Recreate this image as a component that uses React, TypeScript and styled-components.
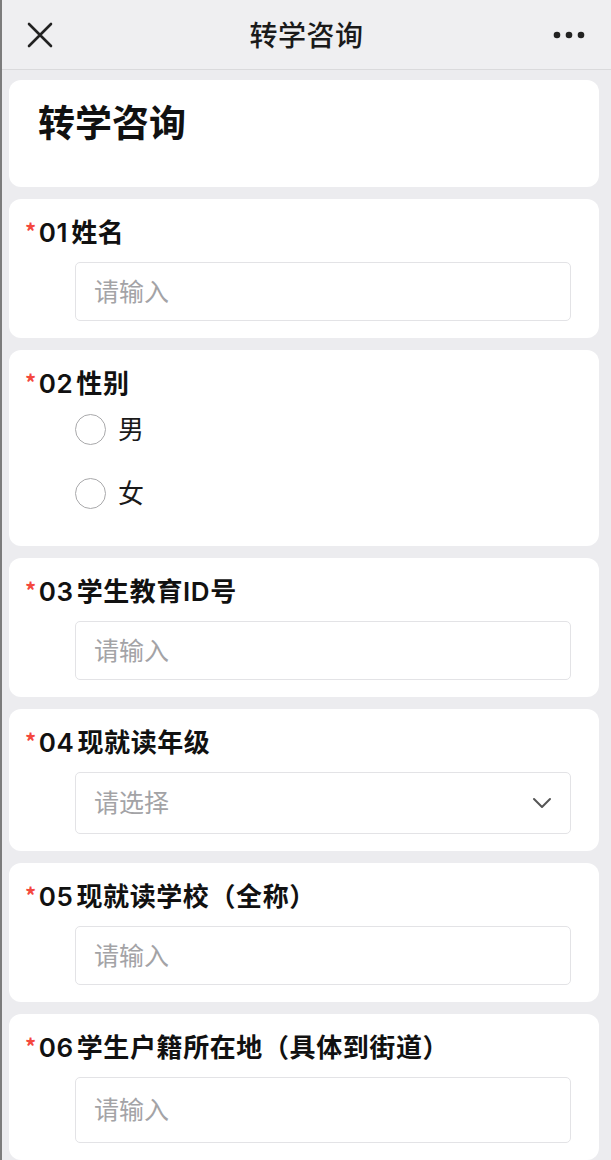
import React from "react";
import styled, { createGlobalStyle } from "styled-components";

const GlobalStyle = createGlobalStyle`
  html, body {
    margin: 0;
    padding: 0;
    background: #ececef;
  }
  body {
    font-family: "Noto Sans CJK SC", "Noto Sans", sans-serif;
    color: #111;
  }
  * { box-sizing: border-box; }
`;

const Page = styled.div`
  min-height: 1160px;
  border-left: 2px solid #7c7c7c;
  background: #ececef;
  overflow: hidden;
`;

const NavBar = styled.div`
  height: 70px;
  display: grid;
  grid-template-columns: 80px 1fr 80px;
  align-items: center;
  background: #efeff1;
  border-bottom: 1px solid #dadadc;
`;

const NavTitle = styled.div`
  text-align: center;
  font-size: 28px;
  font-weight: 500;
  color: #1a1a1a;
  letter-spacing: 0.5px;
  padding-bottom: 2px;
`;

const NavButton = styled.div<{ $align: "left" | "right" }>`
  display: flex;
  justify-content: ${(p) => (p.$align === "left" ? "flex-start" : "flex-end")};
  padding: ${(p) => (p.$align === "left" ? "0 0 0 25px" : "0 26px 0 0")};
  align-items: center;
`;

const Content = styled.div`
  display: flex;
  flex-direction: column;
  gap: 12px;
  padding: 10px 12px 0 7px;
`;

const Card = styled.div<{ $bottom?: number }>`
  background: #fff;
  border-radius: 12px;
  padding: 19px 28px ${(p) => p.$bottom ?? 17}px 16px;
`;

const TitleCard = styled.div`
  background: #fff;
  border-radius: 12px;
  height: 107px;
  display: flex;
  align-items: center;
  padding: 0 0 26px 29px;
  font-size: 37px;
  font-weight: 700;
  color: #111;
`;

const Label = styled.div`
  height: 28px;
  line-height: 28px;
  font-family: Inter, "Noto Sans CJK SC", sans-serif;
  font-size: 26px;
  font-weight: 600;
  letter-spacing: 0.6px;
  color: #111;
  white-space: nowrap;
`;

const Num = styled.span`
  margin-right: 3px;
`;

const Star = styled.span`
  color: #f4483d;
  font-family: "Noto Sans CJK SC", sans-serif;
  font-size: 22px;
  font-weight: 700;
  margin-right: 2px;
  position: relative;
  top: -2px;
`;

const Field = styled.div`
  margin: 16px 0 0 50px;
`;

const InputBox = styled.div<{ $height: number }>`
  height: ${(p) => p.$height}px;
  border: 1px solid #e3e3e6;
  border-radius: 5px;
  display: flex;
  align-items: center;
  justify-content: space-between;
  padding: 0 18px 0 18px;
  font-size: 25px;
  color: #a3a3a6;
`;

const RadioGroup = styled.div`
  margin: 0 0 0 50px;
  display: flex;
  flex-direction: column;
`;

const RadioRow = styled.div`
  height: 64px;
  display: flex;
  align-items: center;
  gap: 12px;
  font-size: 26px;
  color: #1a1a1a;
`;

const RaisedText = styled.span`
  position: relative;
  top: -2px;
`;

const RadioCircle = styled.span`
  width: 31px;
  height: 31px;
  border-radius: 50%;
  border: 1.5px solid #a9a9ab;
  background: #fff;
`;

const CloseIcon = () => (
  <svg width="26" height="26" viewBox="0 0 26 26">
    <path d="M2 2 L24 24 M24 2 L2 24" stroke="#222" strokeWidth="2.6" strokeLinecap="round" />
  </svg>
);

const MoreIcon = () => (
  <svg width="32" height="8" viewBox="0 0 32 8">
    <circle cx="4" cy="4" r="3.3" fill="#222" />
    <circle cx="16" cy="4" r="3.3" fill="#222" />
    <circle cx="28" cy="4" r="3.3" fill="#222" />
  </svg>
);

const Chevron = () => (
  <svg width="20" height="12" viewBox="0 0 20 12">
    <polyline points="2,2 10,10 18,2" fill="none" stroke="#555" strokeWidth="2" strokeLinecap="round" strokeLinejoin="round" />
  </svg>
);

type TextField = { no: string; title: string; height: number; select?: boolean };

const fieldsTop: TextField[] = [{ no: "01", title: "姓名", height: 59 }];
const fieldsBottom: TextField[] = [
  { no: "03", title: "学生教育ID号", height: 59 },
  { no: "04", title: "现就读年级", height: 62, select: true },
  { no: "05", title: "现就读学校（全称）", height: 59 },
  { no: "06", title: "学生户籍所在地（具体到街道）", height: 66 },
];

function FieldLabel({ no, title }: { no: string; title: string }) {
  return (
    <Label>
      <Star>*</Star>
      <Num>{no}</Num>
      {title}
    </Label>
  );
}

function InputCard({ field }: { field: TextField }) {
  return (
    <Card>
      <FieldLabel no={field.no} title={field.title} />
      <Field>
        <InputBox $height={field.height}>
          <RaisedText>{field.select ? "请选择" : "请输入"}</RaisedText>
          {field.select && <Chevron />}
        </InputBox>
      </Field>
    </Card>
  );
}

export default function App() {
  return (
    <>
      <GlobalStyle />
      <Page>
        <NavBar>
          <NavButton $align="left">
            <CloseIcon />
          </NavButton>
          <NavTitle>转学咨询</NavTitle>
          <NavButton $align="right">
            <MoreIcon />
          </NavButton>
        </NavBar>
        <Content>
          <TitleCard>转学咨询</TitleCard>
          {fieldsTop.map((f) => (
            <InputCard key={f.no} field={f} />
          ))}
          <Card $bottom={21}>
            <FieldLabel no="02" title="性别" />
            <RadioGroup>
              <RadioRow>
                <RadioCircle />
                <RaisedText>男</RaisedText>
              </RadioRow>
              <RadioRow>
                <RadioCircle />
                <RaisedText>女</RaisedText>
              </RadioRow>
            </RadioGroup>
          </Card>
          {fieldsBottom.map((f) => (
            <InputCard key={f.no} field={f} />
          ))}
        </Content>
      </Page>
    </>
  );
}
